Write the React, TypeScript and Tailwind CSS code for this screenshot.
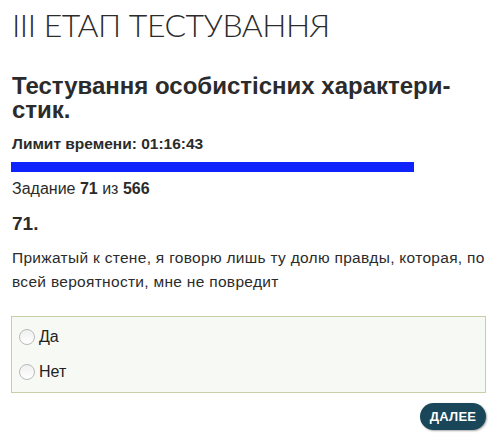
import React, { useState } from 'react'

const sans = { fontFamily: '"Liberation Sans", Arial, sans-serif' }

const App = () => {
  const [answer, setAnswer] = useState<string | null>(null)

  return (
    <div className="w-[496px] h-[439px] bg-white text-[#2b2b2b] pl-3 pr-[10px] pt-[6px]" style={sans}>
      <h1 className="text-[32px] font-light leading-[38px] tracking-[-0.5px] text-[#2b2b2b]" style={{ fontFamily: 'Lato, sans-serif' }}>
        III ЕТАП ТЕСТУВАННЯ
      </h1>

      <h2 className="mt-[30px] text-[24px] font-bold leading-[24px] text-[#2b2b2b]">
        Тестування особистісних характери-
        <br />
        стик.
      </h2>

      <div className="mt-[13px] text-[15.5px] font-bold leading-[18px]">Лимит времени: 01:16:43</div>
      <div className="mt-[9px] h-[10px] w-[403px] bg-[#0f24fd] -ml-px" />

      <div className="mt-[7px] text-[16px] leading-[20px]">
        Задание <b>71</b> из <b>566</b>
      </div>

      <div className="mt-[14px] text-[19px] font-bold leading-[22px]">71.</div>

      <p className="mt-[11px] text-[15.5px] leading-[24px] tracking-[0.3px]">
        Прижатый к стене, я говорю лишь ту долю правды, которая, по всей вероятности, мне не повредит
      </p>

      <div className="mt-[22px] -ml-px w-[475px] h-[77px] border border-[#c6d0a8] bg-[#f7f9f4] px-[7px] py-[8px] flex flex-col gap-[11px]">
        {['Да', 'Нет'].map((label) => (
          <label key={label} className="flex items-center gap-[4px] text-[16px] leading-[24px] text-[#222]">
            <span
              onClick={() => setAnswer(label)}
              className="w-[16px] h-[16px] rounded-full border border-[#b9b9b9] bg-gradient-to-b from-[#f0f0f0] to-white flex items-center justify-center"
            >
              {answer === label && <span className="w-[8px] h-[8px] rounded-full bg-[#333]" />}
            </span>
            {label}
          </label>
        ))}
      </div>

      <div className="flex justify-end mt-[10px]">
        <button className="h-[27px] w-[66px] rounded-full bg-[#1a4659] text-white text-[13px] font-bold tracking-[0.2px] shadow-[1px_1px_2px_rgba(0,0,0,0.35)]">
          ДАЛЕЕ
        </button>
      </div>
    </div>
  )
}

export default App
